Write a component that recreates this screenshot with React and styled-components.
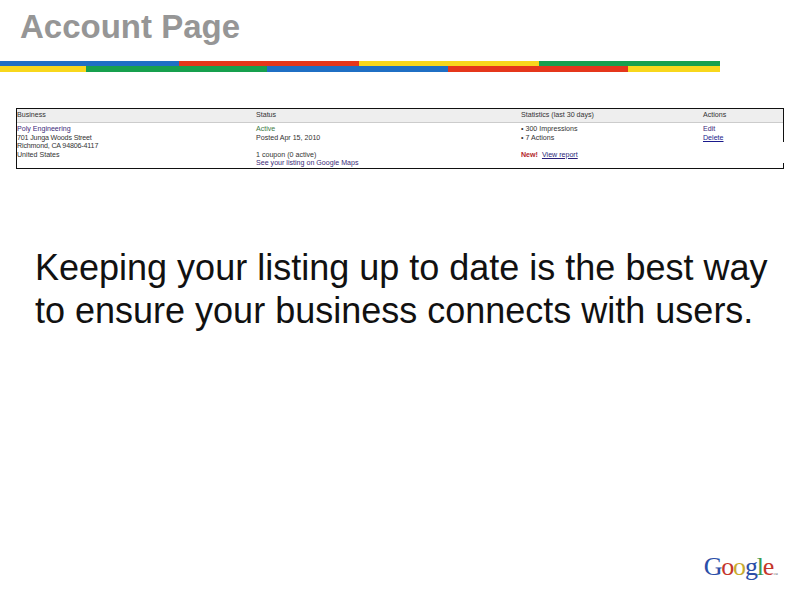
import React from 'react';
import styled, { createGlobalStyle } from 'styled-components';

const topStripe = [
  ['#1f6fc4', 179],
  ['#e5361b', 180],
  ['#f8d71c', 180],
  ['#17a04e', 181],
];

const bottomStripe = [
  ['#f8d71c', 86],
  ['#17a04e', 181],
  ['#1f6fc4', 181],
  ['#e5361b', 180],
  ['#f8d71c', 92],
];

const logoLetters = [
  ['G', '#2b4fa8'],
  ['o', '#c5352b'],
  ['o', '#c9ab2e'],
  ['g', '#2b4fa8'],
  ['l', '#3c9a4c'],
  ['e', '#c5352b'],
];

function Stripe({ parts, height }) {
  return (
    <StripeRow $height={height}>
      {parts.map(([color, width], index) => (
        <StripePart key={index} $color={color} $width={width} />
      ))}
    </StripeRow>
  );
}

function App() {
  return (
    <Page>
      <GlobalStyle />
      <Title>Account Page</Title>
      <Stripes>
        <Stripe parts={topStripe} height={5} />
        <Stripe parts={bottomStripe} height={6} />
      </Stripes>
      <Listing>
        <ListingHeader>
          <Cell>Business</Cell>
          <Cell>Status</Cell>
          <Cell>Statistics (last 30 days)</Cell>
          <Cell>Actions</Cell>
        </ListingHeader>
        <ListingBody>
          <Cell>
            <Line $color="#3b2a78">Poly Engineering</Line>
            <Line $tight>701 Junga Woods Street</Line>
            <Line $tight>Richmond, CA 94806-4117</Line>
            <Line>United States</Line>
          </Cell>
          <Cell>
            <Line $color="#3d7a45">Active</Line>
            <Line>Posted Apr 15, 2010</Line>
            <Line>&nbsp;</Line>
            <Line>1 coupon (0 active)</Line>
            <Line $color="#3b2a78">See your listing on Google Maps</Line>
          </Cell>
          <Cell>
            <Line>• 300 Impressions</Line>
            <Line>• 7 Actions</Line>
            <Line>&nbsp;</Line>
            <Line>
              <NewTag>New!</NewTag>
              <ReportLink>View report</ReportLink>
            </Line>
          </Cell>
          <Cell>
            <Line $color="#3b2a78">Edit</Line>
            <Line $color="#1a1a8c" $underline>
              Delete
            </Line>
          </Cell>
        </ListingBody>
        <BorderNotch />
      </Listing>
      <Message>
        Keeping your listing up to date is the best way to ensure your business
        connects with users.
      </Message>
      <Footer>
        <Logo>
          {logoLetters.map(([letter, color], index) => (
            <LogoLetter key={index} $color={color}>
              {letter}
            </LogoLetter>
          ))}
          <LogoMark>™</LogoMark>
        </Logo>
      </Footer>
    </Page>
  );
}

const GlobalStyle = createGlobalStyle`
  html, body {
    margin: 0;
    background: #ffffff;
  }
`;

const Page = styled.div`
  width: 800px;
  height: 600px;
  display: flex;
  flex-direction: column;
  overflow: hidden;
  font-family: 'Liberation Sans', Arial, sans-serif;
`;

const Title = styled.h1`
  margin: 0;
  padding: 10px 0 0 20px;
  height: 51px;
  box-sizing: border-box;
  font-size: 33px;
  line-height: 34px;
  font-weight: 700;
  color: #969696;
`;

const Stripes = styled.div`
  margin-top: 10px;
  display: flex;
  flex-direction: column;
`;

const StripeRow = styled.div`
  display: flex;
  height: ${(props) => props.$height}px;
`;

const StripePart = styled.div`
  width: ${(props) => props.$width}px;
  background: ${(props) => props.$color};
`;

const Listing = styled.section`
  position: relative;
  margin: 36px 0 0 16px;
  width: 768px;
  height: 61px;
  box-sizing: border-box;
  border: 1px solid #111111;
  font-size: 7.1px;
  color: #333333;
`;

const columns = `
  display: grid;
  grid-template-columns: 239px 265px 182px 1fr;
`;

const ListingHeader = styled.div`
  ${columns}
  height: 14px;
  box-sizing: border-box;
  line-height: 12px;
  background: #eeeeee;
  border-bottom: 1px solid #cccccc;
`;

const ListingBody = styled.div`
  ${columns}
  padding-top: 2px;
`;

const Cell = styled.div`
  white-space: nowrap;
`;

const Line = styled.div`
  height: 8.6px;
  line-height: 8.6px;
  color: ${(props) => props.$color || 'inherit'};
  letter-spacing: ${(props) => (props.$tight ? '-0.15px' : '0')};
  text-decoration: ${(props) => (props.$underline ? 'underline' : 'none')};
`;

const NewTag = styled.span`
  color: #b3262b;
  font-weight: 700;
  margin-right: 4px;
`;

const ReportLink = styled.span`
  color: #2a1f78;
  text-decoration: underline;
`;

const BorderNotch = styled.div`
  position: absolute;
  right: -1px;
  top: 33px;
  width: 4px;
  height: 21px;
  background: #ffffff;
`;

const Message = styled.p`
  margin: 77px 20px 0 35px;
  font-size: 36px;
  line-height: 43px;
  color: #111111;
`;

const Footer = styled.div`
  margin-top: auto;
  padding: 0 22px 9px 0;
  display: flex;
  justify-content: flex-end;
`;

const Logo = styled.div`
  display: flex;
  align-items: baseline;
  font-family: 'Liberation Serif', 'Times New Roman', serif;
  font-size: 26px;
  line-height: 32px;
  letter-spacing: -1.2px;
`;

const LogoLetter = styled.span`
  color: ${(props) => props.$color};
`;

const LogoMark = styled.span`
  font-size: 5px;
  letter-spacing: 0;
  color: #777777;
  align-self: flex-start;
  margin-top: 8px;
`;

export default App;
